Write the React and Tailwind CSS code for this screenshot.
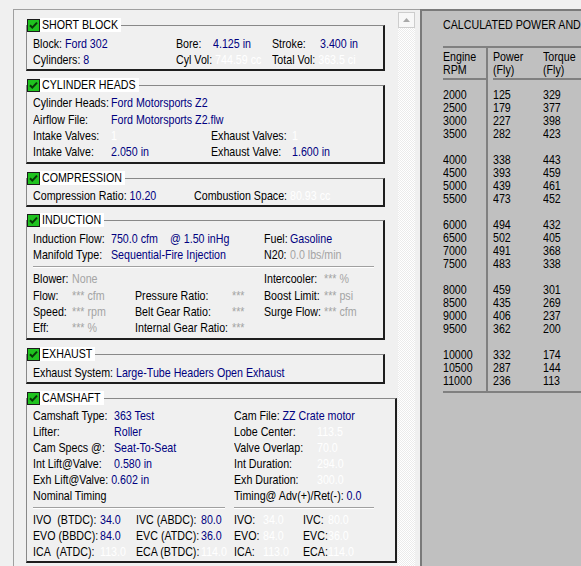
import React from "react";

const NAVY = "text-[#000080]";
const DIM = "text-white";
const GRAY = "text-[#a4a4a4]";

// Condensed text: the dialog font is a narrow sans, drawn here as Liberation Sans squeezed horizontally.
function S({ className = "", children }) {
  return (
    <span className={`inline-block origin-left scale-x-[0.82] whitespace-pre ${className}`}>{children}</span>
  );
}

function CheckMark() {
  return (
    <svg width="13" height="13" viewBox="0 0 13 13" className="block shrink-0">
      <rect x="0.5" y="0.5" width="12" height="12" fill="#1fc21f" stroke="#1b1b1b" />
      <path d="M3 6.2 L5.3 8.6 L10 3.6" fill="none" stroke="#073807" strokeWidth="2" />
    </svg>
  );
}

function Group({ title, tw, className = "", pt = "pt-[3px]", pb = "pb-[2px]", children }) {
  return (
    <fieldset
      className={`w-[359px] border-t border-l border-r-2 border-b-2 border-t-[#888888] border-l-[#888888] border-r-[#1e1e1e] border-b-[#1e1e1e] ${className}`}
    >
      <legend className="flex h-[14px] items-center">
        <CheckMark />
        <div className={`h-[14px] overflow-hidden bg-white pl-[2px] leading-[14px] ${tw}`}>
          <S>{title}</S>
        </div>
      </legend>
      <div className={`px-[6px] ${pt} ${pb}`}>{children}</div>
    </fieldset>
  );
}

function Row({ h = "h-[16px]", children }) {
  return <div className={`flex ${h} items-center whitespace-nowrap leading-[16px]`}>{children}</div>;
}

function Cell({ w = "", className = "", children }) {
  return (
    <div className={`shrink-0 ${w}`}>
      <S className={className}>{children}</S>
    </div>
  );
}

function Rule({ className = "" }) {
  return <div className={`border-t border-b border-t-[#a0a0a0] border-b-white ${className}`} />;
}

function ShortBlock() {
  return (
    <Group title="SHORT BLOCK" tw="w-[81px]" pt="pt-[4px]" pb="pb-[1px]">
      <Row>
        <Cell w="w-[143px]">
          Block: <span className={NAVY}>Ford 302</span>
        </Cell>
        <Cell w="w-[37px]">Bore:</Cell>
        <Cell w="w-[59px]" className={NAVY}>4.125 in</Cell>
        <Cell w="w-[48px]">Stroke:</Cell>
        <Cell className={NAVY}>3.400 in</Cell>
      </Row>
      <Row>
        <Cell w="w-[143px]">
          Cylinders: <span className={NAVY}>8</span>
        </Cell>
        <Cell w="w-[96px]">
          Cyl Vol: <span className={DIM}>744.59 cc</span>
        </Cell>
        <Cell>
          Total Vol: <span className={DIM}>363.5 ci</span>
        </Cell>
      </Row>
    </Group>
  );
}

function CylinderHeads() {
  return (
    <Group title="CYLINDER HEADS" tw="w-[99px]" className="mt-[7px]">
      <Row>
        <Cell w="w-[78px]">Cylinder Heads:</Cell>
        <Cell className={NAVY}>Ford Motorsports Z2</Cell>
      </Row>
      <Row h="h-[17px]">
        <Cell w="w-[78px]">Airflow File:</Cell>
        <Cell className={NAVY}>Ford Motorsports Z2.flw</Cell>
      </Row>
      <Row>
        <Cell w="w-[78px]">Intake Valves:</Cell>
        <Cell w="w-[100px]" className={DIM}>1</Cell>
        <Cell w="w-[81px]">Exhaust Valves:</Cell>
        <Cell className={DIM}>1</Cell>
      </Row>
      <Row>
        <Cell w="w-[78px]">Intake Valve:</Cell>
        <Cell w="w-[100px]" className={NAVY}>2.050 in</Cell>
        <Cell w="w-[81px]">Exhaust Valve:</Cell>
        <Cell className={NAVY}>1.600 in</Cell>
      </Row>
    </Group>
  );
}

function Compression() {
  return (
    <Group title="COMPRESSION" tw="w-[85px]" className="mt-[7px]" pb="pb-[1px]">
      <Row>
        <Cell w="w-[161px]">
          Compression Ratio: <span className={NAVY}>10.20</span>
        </Cell>
        <Cell>
          Combustion Space: <span className={DIM}>80.93 cc</span>
        </Cell>
      </Row>
    </Group>
  );
}

function Induction() {
  const boost = [
    ["Blower:", "None", "", "", "Intercooler:", "*** %"],
    ["Flow:", "*** cfm", "Pressure Ratio:", "***", "Boost Limit:", "*** psi"],
    ["Speed:", "*** rpm", "Belt Gear Ratio:", "***", "Surge Flow:", "*** cfm"],
    ["Eff:", "*** %", "Internal Gear Ratio:", "***", "", ""],
  ];
  return (
    <Group title="INDUCTION" tw="w-[64px]" className="mt-[6px]">
      <Row h="h-[17px]">
        <Cell w="w-[78px]">Induction Flow:</Cell>
        <Cell w="w-[59px]" className={NAVY}>750.0 cfm</Cell>
        <Cell w="w-[94px]" className={NAVY}>@ 1.50 inHg</Cell>
        <Cell w="w-[26px]">Fuel:</Cell>
        <Cell className={NAVY}>Gasoline</Cell>
      </Row>
      <Row>
        <Cell w="w-[78px]">Manifold Type:</Cell>
        <Cell w="w-[153px]" className={NAVY}>Sequential-Fire Injection</Cell>
        <Cell w="w-[26px]">N20:</Cell>
        <Cell className={GRAY}>0.0 lbs/min</Cell>
      </Row>
      <Rule className="mt-[3px] mb-[3px] w-[341px]" />
      {boost.map((r, i) => (
        <Row key={r[0]} h={i === 1 ? "h-[17px]" : "h-[16px]"}>
          <Cell w="w-[39px]">{r[0]}</Cell>
          <Cell w="w-[63px]" className={GRAY}>{r[1]}</Cell>
          <Cell w="w-[97px]">{r[2]}</Cell>
          <Cell w="w-[32px]" className={GRAY}>{r[3]}</Cell>
          <Cell w="w-[60px]">{r[4]}</Cell>
          <Cell className={GRAY}>{r[5]}</Cell>
        </Row>
      ))}
    </Group>
  );
}

function Exhaust() {
  return (
    <Group title="EXHAUST" tw="w-[55px]" className="mt-[7px]" pt="pt-[4px]" pb="pb-[1px]">
      <Row>
        <Cell>
          Exhaust System: <span className={NAVY}>Large-Tube Headers Open Exhaust</span>
        </Cell>
      </Row>
    </Group>
  );
}

function Camshaft() {
  const specs = [
    ["Camshaft Type:", "363 Test", "Cam File:", "ZZ Crate motor", NAVY],
    ["Lifter:", "Roller", "Lobe Center:", "113.5", DIM],
    ["Cam Specs @:", "Seat-To-Seat", "Valve Overlap:", "70.0", DIM],
    ["Int Lift@Valve:", "0.580 in", "Int Duration:", "294.0", DIM],
    ["Exh Lift@Valve:", "0.602 in", "Exh Duration:", "300.0", DIM],
  ];
  const events = [
    ["IVO  (BTDC):", "34.0", NAVY, "IVC (ABDC):", "80.0", NAVY, "IVO:", "34.0", "IVC:", "80.0"],
    ["EVO (BBDC):", "84.0", NAVY, "EVC (ATDC):", "36.0", NAVY, "EVO:", "84.0", "EVC:", "36.0"],
    ["ICA  (ATDC):", "113.0", DIM, "ECA (BTDC):", "114.0", DIM, "ICA:", "113.0", "ECA:", "114.0"],
  ];
  return (
    <Group title="CAMSHAFT" tw="w-[64px]" className="mt-[7px]" pb="pb-[1px]">
      {specs.map((r) => (
        <Row key={r[0]}>
          {r[0] === "Exh Lift@Valve:" ? (
            <Cell w="w-[201px]">
              {r[0]} <span className={NAVY}>{r[1]}</span>
            </Cell>
          ) : (
            <>
              <Cell w="w-[81px]">{r[0]}</Cell>
              <Cell w="w-[120px]" className={NAVY}>{r[1]}</Cell>
            </>
          )}
          {r[2] === "Cam File:" ? (
            <Cell>
              {r[2]} <span className={r[4]}>{r[3]}</span>
            </Cell>
          ) : (
            <>
              <Cell w="w-[83px]">{r[2]}</Cell>
              <Cell className={r[4]}>{r[3]}</Cell>
            </>
          )}
        </Row>
      ))}
      <Row>
        <Cell w="w-[201px]">Nominal Timing</Cell>
        <Cell>
          Timing@ Adv(+)/Ret(-): <span className={NAVY}>0.0</span>
        </Cell>
      </Row>
      <div className="mt-[3px] mb-[3px] flex gap-[9px]">
        <Rule className="w-[192px]" />
        <Rule className="w-[140px]" />
      </div>
      {events.map((r) => (
        <Row key={r[0]}>
          <Cell w="w-[67px]">{r[0]}</Cell>
          <Cell w="w-[36px]" className={r[2]}>{r[1]}</Cell>
          <Cell w="w-[65px]">{r[3]}</Cell>
          <Cell w="w-[33px]" className={r[5]}>{r[4]}</Cell>
          <Cell w="w-[29px]">{r[6]}</Cell>
          <Cell w="w-[40px]" className={DIM}>{r[7]}</Cell>
          <Cell w="w-[25px]">{r[8]}</Cell>
          <Cell className={DIM}>{r[9]}</Cell>
        </Row>
      ))}
    </Group>
  );
}

function ScrollBar() {
  return (
    <div className="flex w-[17px] shrink-0 flex-col pt-[2px]">
      <div className="flex h-[16px] items-center justify-center border border-[#cdcdcd] bg-[#f7f7f7]">
        <svg width="7" height="4" viewBox="0 0 7 4" className="block">
          <path d="M3.5 0L7 4H0Z" fill="#a8a8a8" />
        </svg>
      </div>
      <div className="flex-1 bg-[image:repeating-conic-gradient(#ffffff_0_25%,#ebebeb_0_50%)] bg-[length:2px_2px]" />
    </div>
  );
}

function LeftPanel() {
  return (
    <div className="flex w-[407px] shrink-0 border-t border-l border-[#a0a0a0]">
      <div className="w-[384px] shrink-0 pl-[12px] pt-[8px]">
        <ShortBlock />
        <CylinderHeads />
        <Compression />
        <Induction />
        <Exhaust />
        <Camshaft />
      </div>
      <ScrollBar />
    </div>
  );
}

const CURVE = [
  [2000, 125, 329],
  [2500, 179, 377],
  [3000, 227, 398],
  [3500, 282, 423],
  null,
  [4000, 338, 443],
  [4500, 393, 459],
  [5000, 439, 461],
  [5500, 473, 452],
  null,
  [6000, 494, 432],
  [6500, 502, 405],
  [7000, 491, 368],
  [7500, 483, 338],
  null,
  [8000, 459, 301],
  [8500, 435, 269],
  [9000, 406, 237],
  [9500, 362, 200],
  null,
  [10000, 332, 174],
  [10500, 287, 144],
  [11000, 236, 113],
];

function Column({ head, idx, className }) {
  return (
    <div className={className}>
      <div className="h-[32px] border-b-2 border-[#808080] pt-[2px] leading-[13px]">
        <div>
          <S>{head[0]}</S>
        </div>
        <div>
          <S>{head[1]}</S>
        </div>
      </div>
      <div className="pt-[8px] pb-[4px] leading-[13px]">
        {CURVE.map((r, i) => (
          <div key={i} className="h-[13px]">
            {r ? <S>{r[idx]}</S> : null}
          </div>
        ))}
      </div>
    </div>
  );
}

function PowerPanel() {
  return (
    <div className="min-w-0 flex-1 overflow-hidden border-t-2 border-l-2 border-[#7a7a7a] bg-[#c0c0c0] pl-[21px]">
      <div className="mt-[7px] h-[14px] w-[200px] overflow-hidden leading-[14px]">
        <S>CALCULATED POWER AND TORQUE</S>
      </div>
      <div className="mt-[14px] flex w-[200px] border-t-2 border-b-2 border-[#808080]">
        <Column head={["Engine", "RPM"]} idx={0} className="w-[45px] shrink-0 border-r-2 border-[#808080]" />
        <Column head={["Power", "(Fly)"]} idx={1} className="w-[55px] shrink-0 pl-[5px]" />
        <Column head={["Torque", "(Fly)"]} idx={2} className="flex-1" />
      </div>
    </div>
  );
}

export default function App() {
  return (
    <div className="flex h-[566px] w-[581px] overflow-hidden bg-[#f0f0f0] pt-[9px] pl-[13px] font-['Liberation_Sans',Arial,sans-serif] text-[13px] text-black">
      <LeftPanel />
      <PowerPanel />
    </div>
  );
}
